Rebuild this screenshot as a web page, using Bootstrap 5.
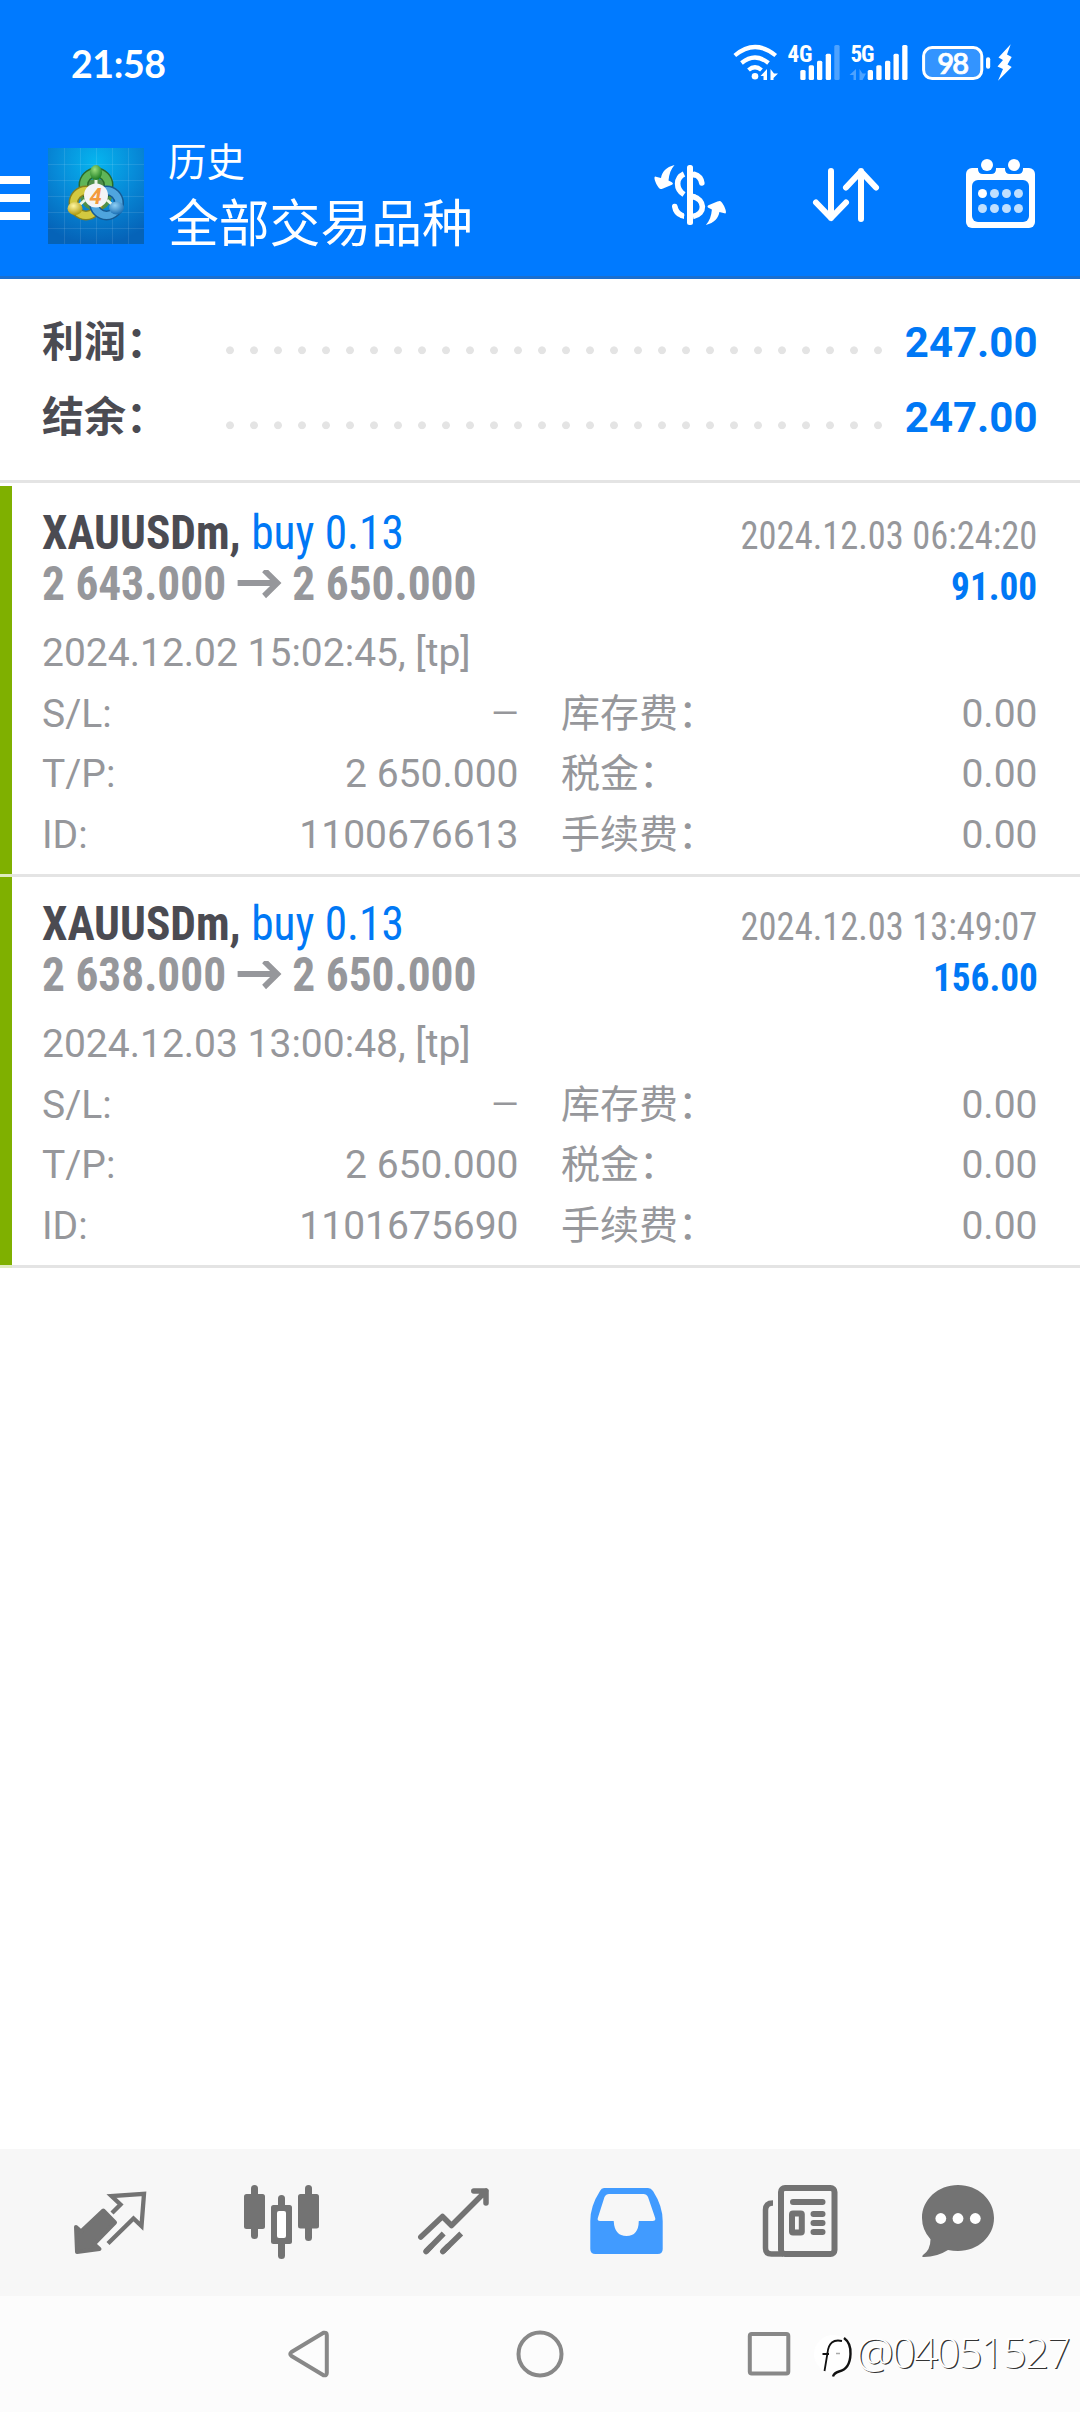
<!DOCTYPE html>
<html lang="zh-CN">
<head>
<meta charset="utf-8">
<meta name="viewport" content="width=device-width, initial-scale=1">
<title>历史</title>
<link href="https://cdn.jsdelivr.net/npm/bootstrap@5.3.0/dist/css/bootstrap.min.css" rel="stylesheet">
<style>
  body { font-family: Roboto, "Noto Sans CJK SC", sans-serif; background: #fff; color: #96979b; height: 2412px; overflow: hidden; }
  svg { display: block; flex: none; }
  .top-area { background: #007aff; color: #fff; border-bottom: 3px solid #1a6fd0; height: 279px; }
  .status-line { height: 115px; padding: 33px 60px 0 71px; }
  .clock { font: 700 37.5px/62px Lato, sans-serif; letter-spacing: -.4px; }
  .app-bar { height: 161px; padding-right: 2px; }
  .app-logo { margin: 0 24px 0 18px; }
  .title-sub { font-size: 38.5px; line-height: 46px; margin-bottom: 9px; }
  .title-main { font-size: 50.8px; line-height: 60px; }
  .titles { padding-top: 3px; }
  .summary { padding: 26px 42.5px 25px 42px; border-bottom: 3px solid #e4e4e4; margin-bottom: 3px; font-size: 42px; line-height: 75px; }
  .sum-label { width: 176px; color: #4b4b52; }
  .sum-value { width: 147.5px; color: #0078f5; }
  .leader { height: 75px; background: radial-gradient(circle at 12px 45.3px, #e4e4e4 3.5px, transparent 4.3px) 0 0 / 24px 75px repeat-x; }
  .trade { height: 388px; border-left: 12px solid #7fb000; padding: 21px 42.5px 0 30px; }
  .trade-rule { height: 3px; background: linear-gradient(to right, #dfebbf 12px, #e4e4e4 12px); }
  .head-line { height: 51px; line-height: 51px; }
  .narrow { font-stretch: 75%; font-size: 48px; transform: scaleX(.945); transform-origin: left; white-space: pre; }
  .narrow-end { font-stretch: 75%; font-size: 39px; transform: scaleX(.935); transform-origin: right; white-space: pre; }
  .narrow-end.fw-bold { transform: scaleX(.955); }
  .ink { color: #4b4b52; }
  .accent { color: #0078f5; }
  .details { margin-top: 14px; font-size: 39px; line-height: 60.67px; }
  .detail-cols { gap: 42.5px; }
  .dash { font-size: 35px; }
  .tab-bar { height: 147px; background: #f7f7f7; padding-left: 22px; color: #737373; }
  .sys-nav { height: 116px; background: #fcfcfc; }
  .watermark { right: 11px; top: 27px; font: 300 42px/57px "Open Sans", sans-serif; letter-spacing: -1.8px; color: #fff; text-shadow: 1.3px 1.3px .5px #333; }
</style>
</head>
<body class="d-flex flex-column">
<header class="top-area flex-shrink-0">
  <div class="status-line d-flex justify-content-between align-items-start">
    <div class="clock">21:58</div>
    <svg width="290" height="60" viewBox="730 33 290 60" fill="#fff">
      <g fill="none" stroke="#fff" stroke-width="4.2">
        <path d="M734.8 55.5Q755 38.500 775.700 55.500"/><path d="M741.5 63Q755 52 768.500 63"/><path d="M748.500 70Q755 64.500 761.500 70"/>
      </g>
      <circle cx="755" cy="76.300" r="3.300"/>
      <path d="M767 69V80H763.500V76H760.500ZM770.500 69V80H773.500V78L778 73.500H774Z"/>
      <g font-family="Roboto" font-weight="700" font-size="23" style="font-stretch:75%"><text x="787.500" y="62" textLength="25">4G</text><text x="850.500" y="62" textLength="24">5G</text></g>
      <rect x="800.300" y="70" width="5.300" height="10" rx="1.500"/><rect x="808.700" y="65.300" width="5.300" height="14.700" rx="1.500"/><rect x="817" y="60.700" width="5.300" height="19.300" rx="1.500"/><rect x="825.700" y="53.700" width="5.300" height="26.300" rx="1.500"/><rect x="834.300" y="45" width="5.300" height="35" rx="1.500" opacity=".3"/>
      <path opacity=".3" d="M856 69V80H853.500V75H849.500ZM859.500 69V80H862.500L866 73.500H862.500Z"/>
      <rect x="867.700" y="70" width="5.300" height="10" rx="1.500"/><rect x="876.300" y="65.300" width="5.300" height="14.700" rx="1.500"/><rect x="885" y="60.700" width="5.300" height="19.300" rx="1.500"/><rect x="893.500" y="53.700" width="5.300" height="26.300" rx="1.500"/><rect x="902.200" y="45" width="5.300" height="35" rx="1.500"/>
      <rect x="923.600" y="47.600" width="58.200" height="31" rx="8.500" fill="#fff" fill-opacity=".2" stroke="#fff" stroke-width="3"/>
      <rect x="986" y="57.300" width="4.200" height="11.400" rx="2"/>
      <text x="953.200" y="74" text-anchor="middle" font-family="Lato" font-weight="600" font-size="29" textLength="32" stroke="#fff" stroke-width=".7">98</text>
      <path d="M1010.700 44.300 998.500 57.500 1003 60 997.500 66.500 1003 69 998 80.700 1011.700 67 1007.500 64.500 1011.700 57 1007 54.500Z"/>
    </svg>
  </div>
  <div class="app-bar d-flex align-items-center">
    <svg width="30" height="48" viewBox="0 0 30 48" fill="#fff"><path d="M0 4h30v8H0zM0 22h30v8H0zM0 40h30v8H0z"/></svg>
    <svg class="app-logo" width="96" height="96" viewBox="0 0 96 96">
      <defs>
        <radialGradient id="sky" cx=".5" cy=".15" r=".85"><stop offset="0" stop-color="#06b5ef"/><stop offset=".5" stop-color="#078ad8"/><stop offset="1" stop-color="#0563b8"/></radialGradient>
        <radialGradient id="gr" cx=".4" cy=".3" r=".7"><stop offset="0" stop-color="#9adf7d"/><stop offset="1" stop-color="#1c7d22"/></radialGradient>
        <radialGradient id="ye" cx=".4" cy=".3" r=".7"><stop offset="0" stop-color="#fff6a0"/><stop offset="1" stop-color="#b09a10"/></radialGradient>
        <radialGradient id="bl" cx=".4" cy=".3" r=".7"><stop offset="0" stop-color="#8fd0f5"/><stop offset="1" stop-color="#1a6fb5"/></radialGradient>
      </defs>
      <rect width="96" height="96" fill="url(#sky)"/>
      <path d="M16.500 0V96M32.500 0V96M48.500 0V96M64.500 0V96M80.500 0V96M0 16.500H96M0 32.500H96M0 48.500H96M0 64.500H96M0 80.500H96" stroke="#fff" stroke-opacity=".1" fill="none"/>
      <circle cx="48" cy="47" r="16" fill="#4f8f4a"/>
      <g fill="none">
        <circle cx="48" cy="37" r="12.500" stroke="#2b6a2a" stroke-width="10"/><circle cx="48" cy="37" r="12.500" stroke="#5fb558" stroke-width="7"/>
        <circle cx="38" cy="55" r="12.500" stroke="#85801f" stroke-width="10"/><circle cx="38" cy="55" r="12.500" stroke="#d3c940" stroke-width="7"/>
        <circle cx="58.500" cy="55" r="12.500" stroke="#165a93" stroke-width="10"/><circle cx="58.500" cy="55" r="12.500" stroke="#4fa5de" stroke-width="7"/>
      </g>
      <path d="M37 52 28 60M59 52 68 60M48 38V26" stroke="#e8f4e4" stroke-width="3"/>
      <ellipse cx="48" cy="24.500" rx="6" ry="7.500" fill="url(#gr)"/><ellipse cx="27" cy="60.500" rx="7.500" ry="6.500" fill="url(#ye)"/><ellipse cx="68.500" cy="60" rx="7.500" ry="6.500" fill="url(#bl)"/>
      <circle cx="48" cy="47.500" r="12" fill="#f4f4f6"/>
      <text x="47.500" y="55.500" text-anchor="middle" font-family="Roboto" font-weight="700" font-style="italic" font-size="22" fill="#f39a3c">4</text>
    </svg>
    <div class="titles">
      <div class="title-sub">历史</div>
      <div class="title-main">全部交易品种</div>
    </div>
    <div class="d-flex ms-auto">
      <svg width="155" height="161" viewBox="613 115 155 161">
        <rect x="687" y="165" width="6" height="60" rx="2.500" fill="#fff"/>
        <g fill="none" stroke="#fff" stroke-width="5.600" >
          <path d="M684 174C675.500 178 675.500 189 684 194.500"/><path d="M693 196.500C705 199.500 706 214 693 216.500"/>
        </g>
        <g fill="none" stroke="#fff" stroke-width="5.600" stroke-linecap="round"><path d="M701.800 183C701 178 698 175.500 694.500 174.500"/><path d="M674.800 206.500C675.500 211 678.500 214 681.500 215.300"/></g>
        <path fill="#fff" d="M693 171.800h2v5.600h-2zM681 212.400l3 1.100v5.600l-4-1.500zM693 193.700l3 1v4.500h-3z"/>
        <g fill="#fff"><path id="swoop" d="M674.500 165C666 167 662 172 661 178L655 176.500C653 178 657 186 659 188 660 189.500 661 189.300 663 188.500L672 184.800C673.500 183.800 673 182.800 671.500 182L668.500 180.500C669 174 671 169 674.500 165Z"/><use href="#swoop" transform="rotate(180 690.2 195)"/></g>
      </svg>
      <svg width="155" height="161" viewBox="768 115 155 161" fill="none" stroke="#fff" stroke-width="6" stroke-linecap="round" stroke-linejoin="round">
        <path d="M831 171V218M816 202.500 831 218 846 202.500M861 219V171M846 187.500 861 171.500 876 187.500"/>
      </svg>
      <svg width="155" height="161" viewBox="923 115 155 161" fill="#fff">
        <rect x="966" y="168" width="69" height="60" rx="6"/>
        <rect x="972" y="180" width="57" height="42" rx="6" fill="#007aff"/>
        <path d="M978 160h18v9q0 5-5 5h-8q-5 0-5-5zM1005 160h18v9q0 5-5 5h-8q-5 0-5-5z" fill="#007aff"/>
        <circle cx="987" cy="165" r="6"/><circle cx="1014" cy="165" r="6"/>
        <circle cx="982.500" cy="193.500" r="4.500"/>
        <g fill="#bfdfff"><circle cx="994.500" cy="193.500" r="4.500"/><circle cx="1006.500" cy="193.500" r="4.500"/><circle cx="1018.500" cy="193.500" r="4.500"/><circle cx="982.500" cy="208.500" r="4.500"/><circle cx="994.500" cy="208.500" r="4.500"/><circle cx="1006.500" cy="208.500" r="4.500"/><circle cx="1018.500" cy="208.500" r="4.500"/></g>
      </svg>
    </div>
  </div>
</header>

<section class="summary">
  <div class="d-flex"><div class="sum-label fw-bold">利润：</div><div class="leader flex-grow-1"></div><div class="sum-value fw-bold text-end">247.00</div></div>
  <div class="d-flex"><div class="sum-label fw-bold">结余：</div><div class="leader flex-grow-1"></div><div class="sum-value fw-bold text-end">247.00</div></div>
</section>

<main>
  <article class="trade">
    <div class="head-line d-flex justify-content-between align-items-baseline"><div class="narrow"><b class="ink">XAUUSDm,</b> <span class="accent">buy 0.13</span></div><div class="narrow-end">2024.12.03 06:24:20</div></div>
    <div class="head-line d-flex justify-content-between align-items-baseline"><div class="narrow fw-bold">2 643.000 <svg class="d-inline-block align-baseline" width="48" height="30" viewBox="0 0 48 30" fill="none" stroke="currentColor" stroke-width="6"><path d="M1 13H44M29 0 43 13 29 26"/></svg> 2 650.000</div><div class="narrow-end fw-bold accent">91.00</div></div>
    <div class="details">
      <div>2024.12.02 15:02:45, [tp]</div>
      <div class="detail-cols d-flex">
        <div class="w-50">
          <div class="d-flex justify-content-between"><span>S/L:</span><span class="dash">—</span></div>
          <div class="d-flex justify-content-between"><span>T/P:</span><span>2 650.000</span></div>
          <div class="d-flex justify-content-between"><span>ID:</span><span>1100676613</span></div>
        </div>
        <div class="w-50">
          <div class="d-flex justify-content-between"><span>库存费：</span><span>0.00</span></div>
          <div class="d-flex justify-content-between"><span>税金：</span><span>0.00</span></div>
          <div class="d-flex justify-content-between"><span>手续费：</span><span>0.00</span></div>
        </div>
      </div>
    </div>
  </article>
  <div class="trade-rule"></div>
  <article class="trade">
    <div class="head-line d-flex justify-content-between align-items-baseline"><div class="narrow"><b class="ink">XAUUSDm,</b> <span class="accent">buy 0.13</span></div><div class="narrow-end">2024.12.03 13:49:07</div></div>
    <div class="head-line d-flex justify-content-between align-items-baseline"><div class="narrow fw-bold">2 638.000 <svg class="d-inline-block align-baseline" width="48" height="30" viewBox="0 0 48 30" fill="none" stroke="currentColor" stroke-width="6"><path d="M1 13H44M29 0 43 13 29 26"/></svg> 2 650.000</div><div class="narrow-end fw-bold accent">156.00</div></div>
    <div class="details">
      <div>2024.12.03 13:00:48, [tp]</div>
      <div class="detail-cols d-flex">
        <div class="w-50">
          <div class="d-flex justify-content-between"><span>S/L:</span><span class="dash">—</span></div>
          <div class="d-flex justify-content-between"><span>T/P:</span><span>2 650.000</span></div>
          <div class="d-flex justify-content-between"><span>ID:</span><span>1101675690</span></div>
        </div>
        <div class="w-50">
          <div class="d-flex justify-content-between"><span>库存费：</span><span>0.00</span></div>
          <div class="d-flex justify-content-between"><span>税金：</span><span>0.00</span></div>
          <div class="d-flex justify-content-between"><span>手续费：</span><span>0.00</span></div>
        </div>
      </div>
    </div>
  </article>
  <div class="trade-rule"></div>
</main>

<nav class="tab-bar d-flex mt-auto flex-shrink-0">
  <svg width="173" height="147" viewBox="22 2149 173 147">
    <path d="M76 2227 81 2231.500 103.300 2210.500 115 2222.500 94 2244 99.500 2249 77 2252Z" fill="currentColor" stroke="currentColor" stroke-width="4" stroke-linejoin="round"/>
    <path d="M112 2213 120.500 2204.500 111.500 2196 144 2193.800 141.500 2226 133.500 2218.500 108 2243.500" fill="none" stroke="currentColor" stroke-width="4.300"/>
  </svg>
  <svg width="173" height="147" viewBox="195 2149 173 147" fill="currentColor">
    <rect x="251" y="2185" width="7" height="54" rx="3.500"/><rect x="244" y="2194" width="21" height="35" rx="2.500"/>
    <rect x="278" y="2195" width="7" height="64" rx="3.500"/><rect x="271" y="2205" width="21" height="39" rx="2.500"/><rect x="277" y="2211" width="9" height="27" rx="2" fill="#fff"/>
    <rect x="305" y="2185" width="7" height="56" rx="3.500"/><rect x="298" y="2194" width="21" height="34.500" rx="2.500"/>
  </svg>
  <svg width="173" height="147" viewBox="368 2149 173 147" fill="none" stroke="currentColor" stroke-width="5.500" stroke-linejoin="round">
    <path stroke-linecap="round" d="M420.800 2237 442.500 2216.500 451.500 2225.500 486 2191M473.800 2191H486V2203"/>
    <path stroke-linecap="round" d="M426 2251.500 431 2246.300M442.800 2251.500 448 2246.300"/><path d="M426 2251.500 443.700 2233.500M442.800 2251.500 461.200 2233.500"/>
  </svg>
  <svg width="173" height="147" viewBox="541 2149 173 147">
    <path fill="#419bff" fill-rule="evenodd" d="M604 2188H648Q651 2188 653 2191 662.700 2206 662.700 2221V2249Q662.700 2254 657.700 2254H595.300Q590.300 2254 590.300 2249V2221Q590.300 2206 600 2191 601.500 2188 604 2188ZM609 2194Q606 2194 604.500 2197L597.800 2218Q597 2221 600 2221H613.700Q614.500 2236 626.500 2236T638.800 2221H652.500Q656 2221 655.200 2218L648 2197Q646.500 2194 643.500 2194Z"/>
  </svg>
  <svg width="173" height="147" viewBox="714 2149 173 147" fill="none" stroke="currentColor" stroke-width="6">
    <rect x="781" y="2188" width="53.500" height="66" rx="4"/>
    <path stroke-width="5.500" d="M773 2203Q765.500 2203 765.500 2210V2248Q765.500 2254 771.500 2254H783"/>
    <path stroke-linecap="round" d="M793 2202H822.500M813.500 2214H822.500M813.500 2223H822.500M813.500 2232H822.500"/>
    <rect x="792" y="2213.500" width="9.800" height="19" rx="1"/>
  </svg>
  <svg width="173" height="147" viewBox="887 2149 173 147">
    <path fill="currentColor" d="M958 2185C978 2185 994 2199.500 994 2218S978 2251 958 2251Q953 2251 948 2250 937 2257 924 2257 921 2257 923 2255 930.500 2250 930.500 2239.300 922 2230 922 2218C922 2199.500 938 2185 958 2185Z"/>
    <g fill="#fff"><circle cx="940.800" cy="2218.500" r="5.400"/><circle cx="958" cy="2218.500" r="5.400"/><circle cx="975.300" cy="2218.500" r="5.400"/></g>
  </svg>
</nav>
<footer class="sys-nav position-relative flex-shrink-0">
  <svg width="1080" height="116" viewBox="0 2296 1080 116" fill="none" stroke="#888" stroke-width="4" stroke-linejoin="round">
    <path d="M291.500 2352 323.500 2332.800Q326.800 2332 326.800 2335V2373Q326.800 2376 323.500 2375.200L291.500 2356Q289 2354 291.500 2352Z"/>
    <circle cx="540" cy="2354" r="21.500"/>
    <rect x="749.800" y="2334" width="38.500" height="39.500" rx="2"/>
    <circle cx="833" cy="2354" r="19" fill="#fff" stroke="none"/>
    <g stroke="#111" stroke-width="1.800"><path d="M842 2341Q829 2338 827.500 2353L824.500 2371M822.500 2354H829"/><path stroke-width="2.400" d="M844 2338Q851 2343 850.500 2354 850 2369 839 2371.500 834 2373 833 2376.500"/></g>
    <path d="M836 2353.500H840" stroke="#aaa" stroke-width="1.500"/>
  </svg>
  <div class="watermark position-absolute">@04051527</div>
</footer>
<script src="https://cdn.jsdelivr.net/npm/bootstrap@5.3.0/dist/js/bootstrap.bundle.min.js"></script>
</body>
</html>
